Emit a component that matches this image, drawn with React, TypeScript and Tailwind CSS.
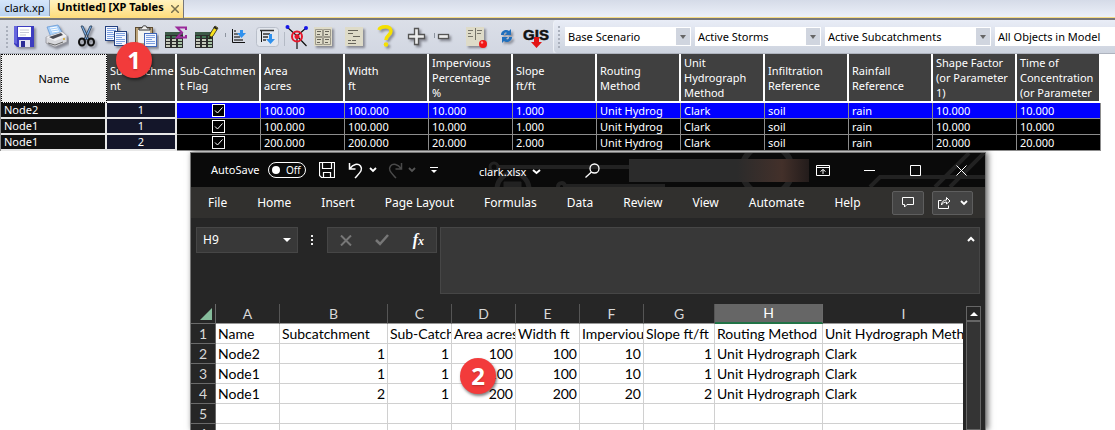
import React from "react";

const Shadow = ({ children }: { children: React.ReactNode }) => (
  <g style={{ filter: "drop-shadow(2px 2px 1px rgba(60,60,70,0.5))" }}>{children}</g>
);

const Lines = ({ x, y, w, n, color }: { x: number; y: number; w: number; n: number; color: string }) => (
  <g stroke={color} strokeWidth="1">
    {Array.from({ length: n }, (_, i) => (
      <path key={i} d={`M${x} ${y + i * 2 + 0.5}h${i % 3 === 2 ? w - 3 : w}`} />
    ))}
  </g>
);

const Sheet = ({ y }: { y: number }) => (
  <g>
    <rect x="6" y={y} width="18" height="16" fill="#2c2c2c" />
    <rect x="6" y={y} width="18" height="3" fill="#3d5a48" />
    {[0, 1, 2, 3].map((r) =>
      [0, 1, 2].map((c) => (
        <rect key={`${r}${c}`} x={7 + c * 6} y={y + 4 + r * 3} width="4" height="2" fill={r === 0 ? "#3f7552" : c === 2 ? "#a8c4a6" : "#c6cabc"} />
      )),
    )}
  </g>
);

const tools: { name: string; art: React.ReactNode }[] = [
  {
    name: "Save",
    art: (
      <Shadow>
        <path d="M5 4h20v21H8l-3-3z" fill="#3c3cc0" />
        <path d="M5 4h3v18l-3-1z" fill="#6666dd" />
        <rect x="9" y="5" width="13" height="10" fill="#fff" />
        <path d="M11 8h9M11 10.5h9M11 13h6" stroke="#c8cad6" />
        <rect x="10" y="18" width="11" height="7" fill="#e4e4f0" />
        <rect x="12" y="19" width="4" height="6" fill="#2c2c96" />
      </Shadow>
    ),
  },
  {
    name: "Print",
    art: (
      <Shadow>
        <path d="M8 5l11-2 5 9-12 3z" fill="#a8d0fa" stroke="#5b8fd0" strokeWidth=".7" />
        <path d="M11 6l7-1M12 8l7-1M13 10l7-1" stroke="#fff" />
        <path d="M7 15l16-5 5 4v6l-12 5-9-4z" fill="#d8d8dc" stroke="#8b8b92" strokeWidth=".7" />
        <path d="M7 15l9 4 12-5-5-4z" fill="#efeff2" />
        <path d="M10 15l12-4 2 2-10 4z" fill="#4a4a52" />
        <path d="M9 21l7 2 8-3" stroke="#666" fill="none" />
        <circle cx="25" cy="17" r="1" fill="#d5a620" />
      </Shadow>
    ),
  },
  {
    name: "Cut",
    art: (
      <Shadow>
        <path d="M12 4l2 0 6 13-2 1zM23 4l-2 0-6 13 2 1z" fill="#7fb0e6" stroke="#253850" strokeWidth=".8" />
        <ellipse cx="13" cy="20" rx="3" ry="3.5" fill="none" stroke="#111" strokeWidth="2" />
        <ellipse cx="22" cy="20" rx="3" ry="3.5" fill="none" stroke="#111" strokeWidth="2" />
      </Shadow>
    ),
  },
  {
    name: "Copy",
    art: (
      <Shadow>
        <rect x="6.5" y="4.5" width="12" height="14" fill="#f2f6ff" stroke="#24407e" />
        <Lines x={8} y={6} w={9} n={6} color="#7ea0e0" />
        <rect x="15.5" y="9.5" width="12" height="14" fill="#f2f6ff" stroke="#24407e" />
        <Lines x={17} y={11} w={9} n={6} color="#7ea0e0" />
      </Shadow>
    ),
  },
  {
    name: "Paste",
    art: (
      <Shadow>
        <rect x="6.5" y="5.5" width="17" height="19" fill="#bda57c" stroke="#5e4c30" />
        <rect x="9" y="8" width="12" height="13" fill="#f3f3f0" />
        <path d="M10 8V6h3c0-3 5-3 5 0h3v2z" fill="#eee" stroke="#333" />
        <rect x="15.5" y="11.5" width="12" height="13" fill="#f2f6ff" stroke="#4066b8" />
        <Lines x={17} y={13} w={9} n={5} color="#7ea0e0" />
      </Shadow>
    ),
  },
  {
    name: "Column statistics",
    art: (
      <g>
        <Sheet y={10} />
        <path d="M27 8V5.500h-9l5 5-5 5h9V13" fill="none" stroke="#9a2a9a" strokeWidth="2" />
      </g>
    ),
  },
  {
    name: "Edit table",
    art: (
      <g>
        <Sheet y={10} />
        <path d="M20 17l1-5 5-8 3 2-5 8z" fill="#f8e11c" stroke="#222" strokeWidth=".8" />
        <path d="M20 17l1-3 2 1z" fill="#111" />
        <path d="M25 5l3 2" stroke="#222" strokeWidth="2" />
      </g>
    ),
  },
  {
    name: "Sort ascending",
    art: (
      <g>
        <path d="M6.500 11v4" stroke="#8d949f" />
        <path d="M13.500 7v13.500H26" fill="none" stroke="#111" />
        <path d="M15 9h2M15 12h4M15 15h6M15 18h9" stroke="#444" strokeWidth="1.500" />
        <path d="M21 8h3v3h3l-4.500 5L18 11h3z" fill="#2f91ee" />
      </g>
    ),
  },
  {
    name: "Sort descending",
    art: (
      <g>
        <rect x="7.500" y="5.500" width="22" height="19" rx="3" fill="#e3e7ee" stroke="#b9bfca" />
        <path d="M12.500 8v12" stroke="#111" />
        <path d="M11 8.500h14M14 12h7M14 15h5M14 18h3" stroke="#333" strokeWidth="1.500" />
        <path d="M20 12h3v5h3l-4.500 5L17 17h3z" fill="#2f91ee" />
      </g>
    ),
  },
  {
    name: "Network node",
    art: (
      <g>
        <path d="M5.500 10v14" stroke="#b4bac5" />
        <path d="M8 5l10 9 9-8M18 14v13M18 14l9.500 10" stroke="#111" fill="none" strokeWidth="1.200" />
        <circle cx="18" cy="14.500" r="5" fill="none" stroke="#e6182c" strokeWidth="2" />
        <circle cx="18" cy="14.500" r="2.500" fill="#e6182c" />
        <circle cx="8.500" cy="5" r="2" fill="#1616e8" />
        <circle cx="27" cy="6" r="2" fill="#1616e8" />
      </g>
    ),
  },
  {
    name: "Form view",
    art: (
      <Shadow>
        <rect x="5" y="5" width="18" height="19" fill="#dedbc8" />
        <path d="M6.500 7.500h7v7h-7zM14.500 7.500h7v7h-7zM6.500 15.500h7v7h-7zM14.500 15.500h7v7h-7z" fill="none" stroke="#9c998b" />
        <path d="M8 9.500h4M8 12.500h3M16 9.500h4M16 12.500h3M8 17.500h4M8 20.500h3M16 17.500h4M16 20.500h3" stroke="#66645a" />
      </Shadow>
    ),
  },
  {
    name: "Text report",
    art: (
      <Shadow>
        <rect x="6" y="5" width="18" height="19" fill="#dedbc8" />
        <path d="M9 8.500h10M9 11.500h5M14 14.500h7M9 18.500h3M13 18.500h4M9 21.500h8" stroke="#66645a" />
      </Shadow>
    ),
  },
  {
    name: "Help",
    art: (
      <Shadow>
        <path d="M10 8c1-4 12-5 12 1 0 4-5 4-5 9" fill="none" stroke="#f5e000" strokeWidth="3.500" />
        <circle cx="17" cy="22.500" r="2.300" fill="#f5e000" />
      </Shadow>
    ),
  },
  {
    name: "Add row",
    art: (
      <Shadow>
        <path d="M15.500 6.500h4v6h6v4h-6v6h-4v-6h-6v-4h6z" fill="#ececec" stroke="#555" strokeWidth="1.300" />
      </Shadow>
    ),
  },
  {
    name: "Remove row",
    art: (
      <g>
        <path d="M5.500 11v5" stroke="#8d949f" />
        <Shadow>
          <rect x="9.500" y="12.500" width="10" height="4" fill="#ececec" stroke="#555" strokeWidth="1.300" />
        </Shadow>
      </g>
    ),
  },
  {
    name: "Record report",
    art: (
      <g>
        <Shadow>
          <rect x="7" y="5" width="18" height="19" fill="#dedbc8" />
          <path d="M16.500 6v12M9 8.500h5M9 11.500h3M9 14.500h5M18 8.500h5M18 11.500h4" stroke="#77756a" />
        </Shadow>
        <circle cx="24" cy="22" r="4" fill="#f01818" />
        <circle cx="23" cy="20.500" r="1.200" fill="#ff9a9a" />
      </g>
    ),
  },
  {
    name: "Refresh",
    art: (
      <Shadow>
        <path d="M12 13c0-5 6-6 8-4l2-2v6h-6l2-2c-2-1-3 0-3 2z" fill="#1f6fbd" />
        <path d="M23 15c0 5-6 6-8 4l-2 2v-6h6l-2 2c2 1 3 0 3-2z" fill="#1f6fbd" />
      </Shadow>
    ),
  },
];

const headers = [
  "Subcatchme\nnt",
  "Sub-Catchmen\nt Flag",
  "Area\nacres",
  "Width\nft",
  "Impervious\nPercentage\n%",
  "Slope\nft/ft",
  "Routing\nMethod",
  "Unit\nHydrograph\nMethod",
  "Infiltration\nReference",
  "Rainfall\nReference",
  "Shape Factor\n(or Parameter\n1)",
  "Time of\nConcentration\n(or Parameter",
];

const nodes = [
  ["Node2", "1", "100.000", "100.000", "10.000", "1.000", "Unit Hydrog", "Clark", "soil", "rain", "10.000", "10.000"],
  ["Node1", "1", "100.000", "100.000", "10.000", "1.000", "Unit Hydrog", "Clark", "soil", "rain", "10.000", "10.000"],
  ["Node1", "2", "200.000", "200.000", "20.000", "2.000", "Unit Hydrog", "Clark", "soil", "rain", "20.000", "20.000"],
];

const combos = [
  { label: "Scenario", value: "Base Scenario", width: "w-[126px]" },
  { label: "Storms", value: "Active Storms", width: "w-[126px]" },
  { label: "Subcatchments", value: "Active Subcatchments", width: "w-[166px]" },
  { label: "Objects", value: "All Objects in Model", width: "w-[166px]" },
];

const Grip = () => (
  <svg width="4" height="24" className="shrink-0" aria-hidden="true">
    {[0, 4, 8, 12, 16, 20].map((y) => (
      <rect key={y} x="1" y={y + 1} width="2" height="2" fill="#aab0bc" />
    ))}
  </svg>
);

function TabBar() {
  return (
    <div className="flex h-[20px] items-start border-b-2 border-[#77777a] bg-linear-to-b from-[#d5dbe8] to-[#eef2fa]">
      <div className="flex h-[18px] w-full border-b border-[#f6dc86]">
        <button className="h-[16px] w-[50px] border-r border-[#9099a8] bg-linear-to-b from-[#d5e6fa] to-[#bcd4f0] text-[11px] leading-[14px] text-black">
          clark.xp
        </button>
        <div className="flex h-[18px] w-[134px] items-start justify-between border-r border-[#77777a] bg-linear-to-b from-[#fff2bf] to-[#ffdc7a] pr-1 pl-[7px]">
          <button className="text-[11px] leading-[14px] font-bold whitespace-nowrap text-black">Untitled] [XP Tables</button>
          <button aria-label="Close tab" className="mt-[5px]">
            <svg width="8" height="8" viewBox="0 0 8 8" aria-hidden="true">
              <path d="M0 0l8 8M8 0L0 8" stroke="#77704f" strokeWidth="1.500" />
            </svg>
          </button>
        </div>
      </div>
    </div>
  );
}

function Toolbar() {
  return (
    <div className="flex h-[34px] overflow-hidden border-b border-[#aeb3be] bg-[#dce0e9]">
      <div className="flex shrink-0 items-center bg-linear-to-b from-[#dbdfe8] to-[#d2d7e2] pl-[5px]">
        <Grip />
        {tools.map((t) => (
          <button key={t.name} aria-label={t.name} className="h-[30px] w-[30px]">
            <svg width="30" height="30" viewBox="0 0 30 30" aria-hidden="true">
              {t.art}
            </svg>
          </button>
        ))}
        <button aria-label="GIS import" className="h-[30px] w-[34px]">
          <svg width="34" height="30" viewBox="0 0 34 30" aria-hidden="true">
            <text x="17" y="18" textAnchor="middle" fontSize="15" fontWeight="700" fill="#111" stroke="#111" strokeWidth=".5" fontFamily="'Liberation Sans', sans-serif">
              GIS
            </text>
            <path d="M15 15h5v5h3l-5.500 6-5.500-6h3z" fill="#e31414" />
          </svg>
        </button>
      </div>
      <div className="flex grow items-center gap-1 rounded-l border-l border-[#eef1f7] bg-linear-to-b from-[#e9edf7] to-[#cdd3de] pl-[3px]">
        <Grip />
        {combos.map((c) => (
          <div key={c.label} className={`relative flex h-[19px] shrink-0 bg-white ${c.width}`}>
            <select aria-label={c.label} className="block h-[19px] w-full appearance-none bg-transparent p-0 pl-[3px] text-[11px] leading-[18px] text-black">
              <option>{c.value}</option>
            </select>
            <span className="pointer-events-none absolute top-px right-px flex h-[17px] w-[14px] items-center justify-center bg-[#d0d5df]">
              <svg width="6" height="4" aria-hidden="true">
                <path d="M0 0h6L3 4z" fill="#666" />
              </svg>
            </span>
          </div>
        ))}
      </div>
    </div>
  );
}

function NodeTable() {
  return (
    <table className="w-[1101px] table-fixed border-separate border-spacing-0 border-l border-[#8c8c8c] bg-black text-[11px] text-white">
      <colgroup>
        <col className="w-[106px]" />
        <col className="w-[70px]" />
        {Array.from({ length: 11 }, (_, i) => (
          <col key={i} className="w-[84px]" />
        ))}
      </colgroup>
      <thead>
        <tr className="h-[49px] leading-[15px]">
          <th className="border border-dotted border-black bg-[#f0f0f0] text-center font-normal text-black">Name</th>
          {headers.map((h) => (
            <th key={h} className="border-r-2 border-b-2 border-white bg-[#404040] p-0 pl-[3px] text-left font-normal whitespace-pre">
              {h}
            </th>
          ))}
        </tr>
      </thead>
      <tbody>
        {nodes.map(([name, sub, ...rest], r) => (
          <tr key={r} className={r === 0 ? "h-[16px] bg-[#0000ff] leading-[14px]" : "h-[16px] bg-black leading-[14px]"}>
            <td className="border-r-2 border-b-2 border-[#e8e8e8] bg-[#101010] p-0 pl-[3px]">{name}</td>
            <td className="border-r-2 border-b-2 border-[#e8e8e8] bg-[#14162a] p-0 text-center">{sub}</td>
            <td className="border-r border-b border-[#8c8c8c] p-0 text-center">
              <input
                type="checkbox"
                defaultChecked
                aria-label={`Flag row ${r + 1}`}
                className="mx-auto block h-[13px] w-[13px] appearance-none border border-white bg-black bg-[url('data:image/svg+xml,%3Csvg%20xmlns=%22http://www.w3.org/2000/svg%22%20viewBox=%220%200%2011%2011%22%3E%3Cpath%20d=%22M2%205.500l2.500%202.500L9.500%202.500%22%20fill=%22none%22%20stroke=%22white%22/%3E%3C/svg%3E')]"
              />
            </td>
            {rest.map((v, i) => (
              <td key={i} className="overflow-hidden border-r border-b border-[#8c8c8c] p-0 pl-[3px] whitespace-nowrap">
                {v}
              </td>
            ))}
          </tr>
        ))}
      </tbody>
    </table>
  );
}

const Chevron = ({ dim }: { dim?: boolean }) => (
  <svg width="8" height="6" viewBox="0 0 8 6" aria-hidden="true">
    <path d="M1 1l3 3 3-3" fill="none" stroke={dim ? "#555" : "#fff"} strokeWidth="1.800" />
  </svg>
);

function TitleBar() {
  return (
    <div className="relative flex h-[34px] shrink-0 items-center overflow-hidden bg-[#0a0a0a] text-[11px] text-white">
      <svg className="absolute top-0 right-0" width="795" height="34" fill="none" stroke="#222" strokeWidth="4" aria-hidden="true">
        <circle cx="304" cy="14" r="4" strokeWidth="3" />
        <path d="M309 14h140M368 34c0-5 6-5 7-1h100M680 34l10-10h105M745 34l34-34M760 34l34-34" />
        <circle cx="323" cy="36" r="16" strokeWidth="5" />
        <path d="M314 34v-5h17v5" fill="#222" strokeWidth="1" />
        <circle cx="577" cy="17" r="25" strokeWidth="6" />
      </svg>
      <div className="relative flex w-full items-center pl-[20px]">
        <span className="w-[57px]">AutoSave</span>
        <button className="flex h-[16px] w-[38px] items-center rounded-full border border-white pl-[3px] text-[10px] leading-[14px]">
          <span className="mr-[6px] h-[8px] w-[8px] rounded-full bg-white" />
          Off
        </button>
        <button aria-label="Save workbook" className="ml-[13px]">
          <svg width="16" height="16" viewBox="0 0 16 16" fill="none" stroke="#fff" aria-hidden="true">
            <path d="M.5.5h15v15h-13l-2-2zM3.500.5v6h9v-6M4.500 15.500v-5h7v5" strokeWidth="1.200" />
          </svg>
        </button>
        <button aria-label="Undo" className="ml-[13px] flex items-center gap-[5px]">
          <svg width="16" height="17" viewBox="0 0 16 17" fill="none" stroke="#fff" strokeWidth="1.500" aria-hidden="true">
            <path d="M1.500 1v6h6M2 6.500C5 2 10 1 12.500 4c3 4-1 7-5.500 12" />
          </svg>
          <Chevron />
        </button>
        <button aria-label="Redo" className="ml-[10px] flex items-center gap-[5px]">
          <svg width="16" height="17" viewBox="0 0 16 17" fill="none" stroke="#4a4a4a" strokeWidth="1.500" aria-hidden="true">
            <path d="M14.500 1v6h-6M14 6.500C11 2 6 1 3.500 4c-3 4 1 7 5.500 12" />
          </svg>
          <Chevron dim />
        </button>
        <button aria-label="Customize toolbar" className="ml-[14px]">
          <svg width="8" height="7" viewBox="0 0 8 7" aria-hidden="true">
            <path d="M0 .5h8" stroke="#fff" />
            <path d="M1 3h6L4 6z" fill="#fff" />
          </svg>
        </button>
        <button className="ml-[41px] flex items-center gap-[6px] pt-1">
          clark.xlsx
          <svg width="9" height="6" viewBox="0 0 9 6" aria-hidden="true">
            <path d="M1 1l3.500 3L8 1" fill="none" stroke="#fff" strokeWidth="2" />
          </svg>
        </button>
        <button aria-label="Search" className="ml-[44px]">
          <svg width="15" height="15" viewBox="0 0 15 15" fill="none" stroke="#fff" strokeWidth="1.300" aria-hidden="true">
            <circle cx="9.500" cy="5.500" r="4.500" />
            <path d="M6.500 9L.5 14.500" />
          </svg>
        </button>
        <div className="ml-auto h-[23px] w-[180px] bg-linear-to-r from-[#2b2b2b] from-60% via-[#43302a] via-85% to-[#231c1b]" />
        <button aria-label="Ribbon display options" className="ml-[7px]">
          <svg width="14" height="11" viewBox="0 0 14 11" fill="none" stroke="#fff" aria-hidden="true">
            <path d="M.5.5h13v10H.5zM.5 2.500h13M7 9V4.500M4.500 6.500L7 4.500l2.500 2" />
          </svg>
        </button>
        <button aria-label="Minimize" className="ml-[34px]">
          <svg width="11" height="11" aria-hidden="true">
            <path d="M0 5.500h11" stroke="#fff" />
          </svg>
        </button>
        <button aria-label="Maximize" className="ml-[35px]">
          <svg width="11" height="11" fill="none" stroke="#fff" aria-hidden="true">
            <path d="M.5.5h10v10H.5z" />
          </svg>
        </button>
        <button aria-label="Close" className="mr-[18px] ml-[35px]">
          <svg width="11" height="11" stroke="#fff" aria-hidden="true">
            <path d="M.5.5l10 10M10.500.5l-10 10" />
          </svg>
        </button>
      </div>
    </div>
  );
}

const menus = ["File", "Home", "Insert", "Page Layout", "Formulas", "Data", "Review", "View", "Automate", "Help"];

function MenuBar() {
  return (
    <nav className="flex h-[31px] shrink-0 items-center justify-between bg-[#31302e] pr-[12px] pl-[17px] text-[12px] text-white">
      <div className="flex gap-[30px]">
        {menus.map((m) => (
          <button key={m} className="whitespace-nowrap">
            {m}
          </button>
        ))}
      </div>
      <div className="flex gap-2">
        <button aria-label="Comments" className="flex h-[24px] w-[32px] items-center justify-center rounded-xs border border-[#5e5e5e] bg-[#444]">
          <svg width="12" height="11" viewBox="0 0 12 11" fill="none" stroke="#fff" aria-hidden="true">
            <path d="M.5.5h11v7H5l-2.500 2.500V7.500h-2z" />
          </svg>
        </button>
        <button aria-label="Share" className="flex h-[24px] w-[41px] items-center justify-center gap-[9px] rounded-xs border border-[#5e5e5e] bg-[#444]">
          <svg width="13" height="13" viewBox="0 0 13 13" fill="none" stroke="#fff" aria-hidden="true">
            <path d="M3.500 4.500h-3v8h10v-3M3.500 9c0-3 2-5 5-5V1.500L12 5 8.500 8V6c-2 0-4 1-5 3z" />
          </svg>
          <Chevron />
        </button>
      </div>
    </nav>
  );
}

function FormulaBar() {
  return (
    <div className="flex shrink-0 items-start px-[5px] pt-[9px] pb-[10px] text-white">
      <div className="flex h-[26px] w-[102px] items-center border border-[#464646] bg-[#383838] pr-[6px] pl-[6px]">
        <input aria-label="Name box" defaultValue="H9" className="w-full min-w-0 bg-transparent text-[12px] outline-none" />
        <svg width="8" height="5" className="shrink-0" aria-hidden="true">
          <path d="M0 0h8L4 4z" fill="#fff" />
        </svg>
      </div>
      <svg width="3" height="26" className="mx-[13px] shrink-0" fill="#eee" aria-hidden="true">
        <path d="M0 8h2v2H0zM0 12h2v2H0zM0 16h2v2H0z" />
      </svg>
      <div className="flex h-[26px] w-[110px] items-center justify-between border border-[#464646] bg-[#383838] px-[12px]">
        <button aria-label="Cancel">
          <svg width="12" height="11" stroke="#777" strokeWidth="2" aria-hidden="true">
            <path d="M1 .5l10 10M11 .5l-10 10" />
          </svg>
        </button>
        <button aria-label="Enter">
          <svg width="14" height="12" fill="none" stroke="#777" strokeWidth="2.500" aria-hidden="true">
            <path d="M1 6l4 4 8-9" />
          </svg>
        </button>
        <button className="font-['Liberation_Serif',serif] text-[16px] leading-4 font-bold italic">
          f<span className="text-[12px]">x</span>
        </button>
      </div>
      <div className="ml-[3px] flex h-[67px] grow items-start border border-[#464646] bg-[#383838]">
        <input aria-label="Formula" className="h-[26px] min-w-0 grow bg-transparent px-2 text-[12px] outline-none" />
        <button aria-label="Collapse formula bar" className="p-[4px] pt-[8px]">
          <svg width="8" height="6" fill="none" stroke="#fff" strokeWidth="2" aria-hidden="true">
            <path d="M1 5l3-3 3 3" />
          </svg>
        </button>
      </div>
    </div>
  );
}

const letters = ["A", "B", "C", "D", "E", "F", "G", "H", "I"];
const cells = [
  ["Name", "Subcatchment", "Sub-Catchment Flag", "Area acres", "Width ft", "Impervious Percentage", "Slope ft/ft", "Routing Method", "Unit Hydrograph Method"],
  ["Node2", "1", "1", "100", "100", "10", "1", "Unit Hydrograph", "Clark"],
  ["Node1", "1", "1", "100", "100", "10", "1", "Unit Hydrograph", "Clark"],
  ["Node1", "2", "1", "200", "200", "20", "2", "Unit Hydrograph", "Clark"],
  ["", "", "", "", "", "", "", "", ""],
  ["", "", "", "", "", "", "", "", ""],
];

function Worksheet() {
  return (
    <div className="flex min-h-0 grow items-stretch gap-[3px] overflow-hidden pr-[4px]">
      <div className="min-w-0 grow overflow-hidden">
        <table className="w-[calc(100%+22px)] table-fixed border-separate border-spacing-0 font-['Lato',sans-serif] text-[14px] text-black">
          <colgroup>
            <col className="w-[25px]" />
            <col className="w-[64px]" />
            <col className="w-[108px]" />
            <col className="w-[64px]" />
            <col className="w-[64px]" />
            <col className="w-[64px]" />
            <col className="w-[64px]" />
            <col className="w-[71px]" />
            <col className="w-[108px]" />
            <col />
          </colgroup>
          <thead>
            <tr className="h-[20px] leading-[18px] text-[#d8d8d8]">
              <th className="border-r border-b border-[#6a6a6a] p-0">
                <svg width="12" height="12" className="ml-auto mr-[3px]" aria-hidden="true">
                  <path d="M12 0v12H0z" fill="#86bd9c" />
                </svg>
              </th>
              {letters.map((l) => (
                <th
                  key={l}
                  className={
                    l === "H"
                      ? "border-r border-b-2 border-r-[#6a6a6a] border-b-[#217346] bg-[#666] p-0 font-normal text-white"
                      : "border-r border-b border-r-[#555] border-b-[#999] p-0 font-normal"
                  }
                >
                  {l}
                </th>
              ))}
            </tr>
          </thead>
          <tbody>
            {cells.map((row, r) => (
              <tr key={r} className="h-[20px] leading-[19px]">
                <th className="border-r border-b border-[#6a6a6a] p-0 font-normal text-[#d8d8d8]">{r + 1}</th>
                {row.map((v, c) => (
                  <td
                    key={c}
                    className={
                      /^\d+$/.test(v)
                        ? "overflow-hidden border-r border-b border-[#d0d0d0] bg-white p-0 pr-[2px] text-right"
                        : "overflow-hidden border-r border-b border-[#d0d0d0] bg-white p-0 pl-[2px] whitespace-nowrap"
                    }
                  >
                    {v}
                  </td>
                ))}
              </tr>
            ))}
          </tbody>
        </table>
      </div>
      <div className="mt-[2px] flex w-[15px] shrink-0 flex-col">
        <button aria-label="Scroll up" className="flex h-[15px] items-center justify-center border border-[#666] bg-[#262626]">
          <svg width="8" height="4" aria-hidden="true">
            <path d="M0 4h8L4 0z" fill="#fff" />
          </svg>
        </button>
        <div className="grow border border-[#666] bg-[#343434]" />
      </div>
    </div>
  );
}

const Marker = ({ n }: { n: number }) => (
  <span className="flex h-[36px] w-[36px] items-center justify-center rounded-full bg-[#f23b3b] font-['Open_Sans',sans-serif] text-[24px] leading-none font-bold text-white shadow-[1px_2px_3px_rgba(0,0,0,0.5)] text-shadow-sm">
    {n}
  </span>
);

export default function App() {
  return (
    <div className="relative h-screen overflow-hidden bg-white font-['Noto_Sans',sans-serif]">
      <TabBar />
      <Toolbar />
      <NodeTable />
      <div className="absolute top-[42px] left-[116px]">
        <Marker n={1} />
      </div>
      <section className="absolute top-[152px] right-[129px] bottom-0 left-[190px] flex flex-col border border-b-0 border-[#777] bg-[#262626] shadow-[2px_0_6px_rgba(0,0,0,0.6)]">
        <TitleBar />
        <MenuBar />
        <FormulaBar />
        <Worksheet />
        <div className="absolute top-[205px] left-[269px]">
          <Marker n={2} />
        </div>
      </section>
    </div>
  );
}
